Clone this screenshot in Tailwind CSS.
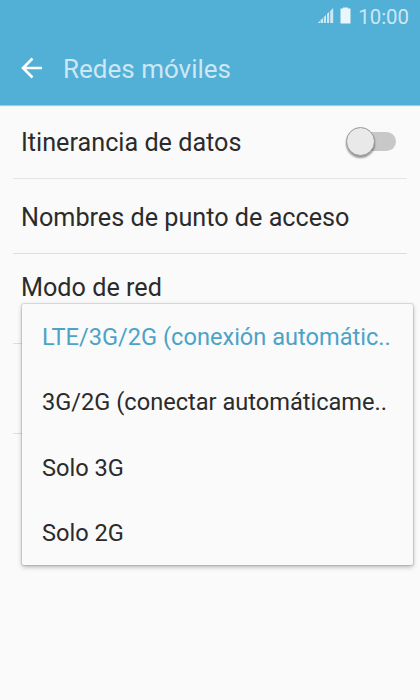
<!DOCTYPE html>
<html lang="es">
<head>
<meta charset="utf-8">
<title>Redes móviles</title>
<script src="https://cdn.jsdelivr.net/npm/@tailwindcss/browser@4"></script>
</head>
<body class="w-[420px] h-[700px] overflow-hidden bg-[#fafafa] font-[Roboto,sans-serif] text-[#2b2b2b] relative">
<header class="h-[105px] bg-[#52afd5] shadow-[0_1px_1px_rgba(0,0,0,0.22)]">
  <div class="h-8 flex items-center justify-end pr-[11px] text-[#cbe8f4]">
    <svg class="w-[17px] h-[17px] mr-[6px] -mt-[2px]" viewBox="0 0 17 17" fill="#cbe8f4"><path d="M0.500 16l2.500-2V16zM3.500 13l2.500-2V16H3.500zM6.800 10l2.200-2V16H6.800zM10 7l2.200-2.200V16H10zM13.200 4l3-3V16h-3z"/></svg>
    <svg class="w-[11px] h-[17px] mr-[7px] -mt-[2px]" viewBox="0 0 11 17" fill="#eaf6fb"><path d="M3 0.500h5V1.500h2.500v15H0.500v-15H3z"/></svg>
    <span class="text-[20.400px] leading-8 pt-[2px]">10:00</span>
  </div>
  <div class="h-[73px] flex items-center pl-[21px]">
    <svg class="w-[22px] h-[22px] -mt-[1px]" viewBox="0 0 22 22" fill="none" stroke="#ffffff" stroke-width="2.600"><path d="M21 11H2M11.500 1.500L2 11l9.500 9.500"/></svg>
    <h1 class="ml-[20px] text-[26px] leading-[30px] tracking-[0px] text-[#cde7f3]">Redes móviles</h1>
  </div>
</header>
<main class="px-[13px] text-[25.200px] leading-[30px]">
  <div class="h-[74px] border-b border-[#e4e4e4] pl-2 pr-[11px] flex items-center justify-between">
    <span class="pt-[2px]">Itinerancia de datos</span>
    <span class="w-[50px] h-[30px] flex items-center relative">
      <span class="w-[40px] h-[19px] ml-[10px] rounded-full bg-[#c8c8c8]"></span>
      <span class="absolute left-0 top-0 w-[29px] h-[29px] rounded-full bg-[#e9e9e9] border border-[#999999] shadow-[0_2px_2px_rgba(0,0,0,0.4)]"></span>
    </span>
  </div>
  <div class="h-[75px] border-b border-[#dedede] pl-2 flex items-center pt-[3px]">Nombres de punto de acceso</div>
  <div class="h-[90px] border-b border-[#dedede] pl-2 pt-[19px]">Modo de red</div>
  <div class="h-[90px] border-b border-[#dedede]"></div>
</main>
<ul class="absolute left-[22px] top-[304px] w-[391px] h-[261px] rounded-[2px] bg-[#fafafa] shadow-[0_0_1px_1px_rgba(0,0,0,0.11),0_2px_5px_rgba(0,0,0,0.28)] pl-5 pt-px text-[23.600px] leading-[65.500px] whitespace-nowrap">
  <li class="h-[65px] text-[#4ca3c7]">LTE/3G/2G (conexión automátic..</li>
  <li class="h-[66px]">3G/2G (conectar automáticame..</li>
  <li class="h-[65px]">Solo 3G</li>
  <li class="h-[65px]">Solo 2G</li>
</ul>
</body>
</html>
